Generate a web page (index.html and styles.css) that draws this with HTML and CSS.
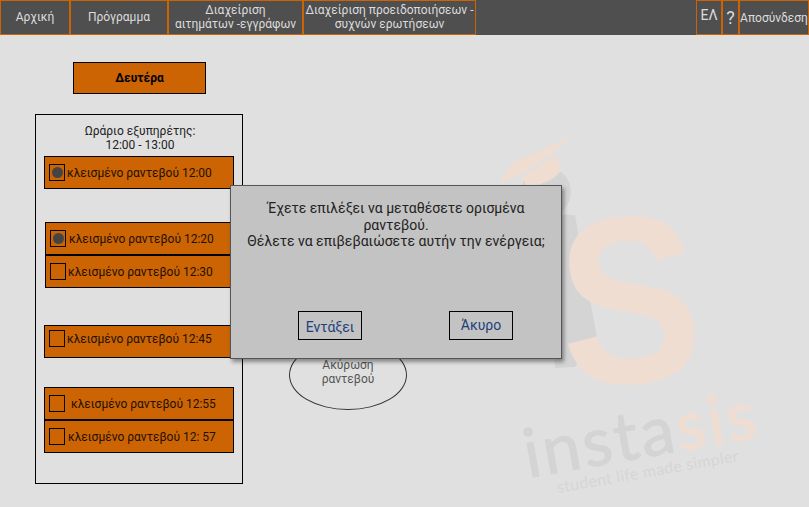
FILE: index.html
```html
<!DOCTYPE html>
<html lang="el">
<head>
    <meta charset="UTF-8">
    <title>Πρόγραμμα</title>
    <link rel="stylesheet" href="styles.css">
</head>
<body>

    <nav class="topbar">
        <a class="nav-item nav-home">Αρχική</a>
        <a class="nav-item nav-program">Πρόγραμμα</a>
        <a class="nav-item nav-requests">Διαχείριση<br>αιτημάτων -εγγράφων</a>
        <a class="nav-item nav-alerts">Διαχείριση προειδοποιήσεων -<br>συχνών ερωτήσεων</a>
        <a class="nav-item nav-lang">ΕΛ</a>
        <a class="nav-item nav-help">?</a>
        <a class="nav-item nav-logout">Αποσύνδεση</a>
    </nav>

    <main class="content">
        <svg class="watermark" width="809" height="507" viewBox="0 0 809 507">
            <g class="wm-person">
                <circle cx="546" cy="192" r="25"/>
                <path d="M535 214 L575 215 L597 338 L575 367 L555 368 Z"/>
            </g>
            <g class="wm-orange">
                <path d="M570 137 L513 163 L498 183 L518 176 L557 150 Z"/>
                <path d="M522 177 L555 155 L562 168 C556 181 538 186 526 186 Z"/>
            </g>
            <text class="wm-s" transform="translate(565 387) rotate(-4) scale(0.88 0.99)">S</text>
            <text class="wm-insta" transform="translate(528 478) rotate(-10)">insta<tspan class="wm-sis">sis</tspan></text>
            <text class="wm-tag" transform="translate(558 493) rotate(-10)">student life made simpler</text>
        </svg>

        <section class="day-col">
            <div class="day-btn">Δευτέρα</div>
            <div class="hours-box">
                <p class="hours-title">Ωράριο εξυπηρέτης:<br>12:00 - 13:00</p>
                <div class="slot slot-first"><span class="check checked"></span><span>κλεισμένο ραντεβού 12:00</span></div>
                <div class="slot slot-shift slot-gap"><span class="check checked"></span><span class="slot-label-in">κλεισμένο ραντεβού 12:20</span></div>
                <div class="slot slot-shift"><span class="check"></span><span>κλεισμένο ραντεβού 12:30</span></div>
                <div class="slot slot-gap2 slot-raised"><span class="check"></span><span>κλεισμένο ραντεβού 12:45</span></div>
                <div class="slot slot-gap3"><span class="check"></span><span class="slot-label-far">κλεισμένο ραντεβού 12:55</span></div>
                <div class="slot"><span class="check"></span><span class="slot-label-in">κλεισμένο ραντεβού 12: 57</span></div>
            </div>
        </section>

        <div class="cancel-oval">Ακύρωση<br>ραντεβού</div>
    </main>

    <div class="dialog">
        <p class="dialog-text">Έχετε επιλέξει να μεταθέσετε ορισμένα<br>ραντεβού.<br>Θέλετε να επιβεβαιώσετε αυτήν την ενέργεια;</p>
        <div class="dialog-actions">
            <button class="dialog-btn btn-ok">Εντάξει</button>
            <button class="dialog-btn btn-cancel">Άκυρο</button>
        </div>
    </div>

</body>
</html>
```

FILE: styles.css
```css
* {
    box-sizing: border-box;
}
html, body {
    height: 100%;
}
body {
    margin: 0;
    overflow: hidden;
    font-family: Roboto, "Noto Sans", sans-serif;
    background-color: #e0e0e0;
    color: #222;
}
.topbar {
    display: flex;
    height: 35px;
    background-color: #4f4f4f;
}
.nav-item {
    display: flex;
    align-items: center;
    justify-content: center;
    text-align: center;
    height: 35px;
    padding-bottom: 1px;
    border: 1.5px solid #cc6404;
    color: #dcdcdc;
    font-size: 12px;
    line-height: 14px;
    white-space: nowrap;
}
.nav-home { width: 70px; }
.nav-program { width: 98px; }
.nav-requests { width: 135px; }
.nav-alerts { width: 173px; }
.nav-lang {
    width: 26px;
    margin-left: auto;
    padding-bottom: 6px;
    font-size: 14px;
}
.nav-help {
    width: 17px;
    padding-top: 2px;
    font-size: 18px;
}
.nav-logout {
    width: 70px;
    padding-bottom: 0;
}
.content {
    position: relative;
    display: flex;
    height: 472px;
}
.watermark {
    position: absolute;
    left: 0;
    top: -35px;
}
.wm-person {
    fill: #d4d4d4;
}
.wm-orange {
    fill: #f0ddd2;
}
.wm-s {
    fill: #f0ddd2;
    font-family: "Liberation Sans", sans-serif;
    font-weight: bold;
    font-size: 240px;
}
.wm-insta {
    fill: #d4d4d4;
    font-family: Lato, sans-serif;
    font-size: 68px;
    letter-spacing: 2.5px;
    stroke: #d4d4d4;
    stroke-width: 1px;
}
.wm-sis {
    fill: #f0ddd2;
    stroke: #f0ddd2;
}
.wm-tag {
    fill: #d6d6d6;
    font-family: Lato, sans-serif;
    font-size: 16px;
    letter-spacing: 0.3px;
}
.day-col {
    position: relative;
    margin-left: 35px;
    width: 208px;
    padding-top: 27px;
}
.day-btn {
    display: flex;
    align-items: center;
    justify-content: center;
    width: 133px;
    height: 32px;
    margin-left: 38px;
    border: 1px solid #000;
    background-color: #cc6404;
    color: #000;
    font-size: 12px;
    font-weight: bold;
}
.hours-box {
    width: 208px;
    height: 370px;
    margin-top: 20px;
    padding: 0 8px;
    border: 1px solid #000;
}
.hours-title {
    margin: 9px 0 0;
    padding-left: 2px;
    text-align: center;
    font-size: 12px;
    line-height: 14px;
}
.slot {
    display: flex;
    align-items: center;
    width: 190px;
    height: 33px;
    padding-left: 4px;
    border: 1px solid #000;
    background-color: #cc6404;
    color: #221000;
    font-size: 12px;
    white-space: nowrap;
}
.slot-first { margin-top: 4px; }
.slot-shift { margin-left: 1px; }
.slot-gap { margin-top: 33px; }
.slot-gap2 { margin-top: 37px; }
.slot-gap3 { margin-top: 29px; }
.slot-raised { padding-bottom: 6px; }
.slot-label-in { margin-left: 1px; }
.slot-label-far { margin-left: 4px; }
.check {
    display: flex;
    align-items: center;
    justify-content: center;
    flex: none;
    width: 16px;
    height: 17px;
    margin-right: 2px;
    border: 1px solid #000;
}
.checked::before {
    content: "";
    width: 11px;
    height: 11px;
    border-radius: 50%;
    background-color: #444;
}
.cancel-oval {
    position: relative;
    display: flex;
    align-items: center;
    justify-content: center;
    width: 118px;
    height: 70px;
    margin: 305px 0 0 46px;
    padding-bottom: 6px;
    border: 1px solid #333;
    border-radius: 50%;
    text-align: center;
    color: #555;
    font-size: 12px;
    line-height: 14px;
}
.dialog {
    position: absolute;
    left: 230px;
    top: 185px;
    width: 332px;
    height: 174px;
    border: 1px solid #555;
    background-color: #c3c3c3;
    box-shadow: 2px 3px 4px rgba(0, 0, 0, 0.4);
}
.dialog-text {
    margin: 14px 0 0;
    text-align: center;
    font-size: 14px;
    line-height: 16.5px;
    color: #222;
}
.dialog-actions {
    display: flex;
    gap: 87px;
    margin: 61px 0 0 67px;
}
.dialog-btn {
    width: 64px;
    height: 29px;
    padding: 0;
    border: 1px solid #000;
    background: none;
    font-family: inherit;
    font-size: 14px;
    color: #1f3f7a;
}
.btn-ok {
    padding-top: 3px;
}
```
